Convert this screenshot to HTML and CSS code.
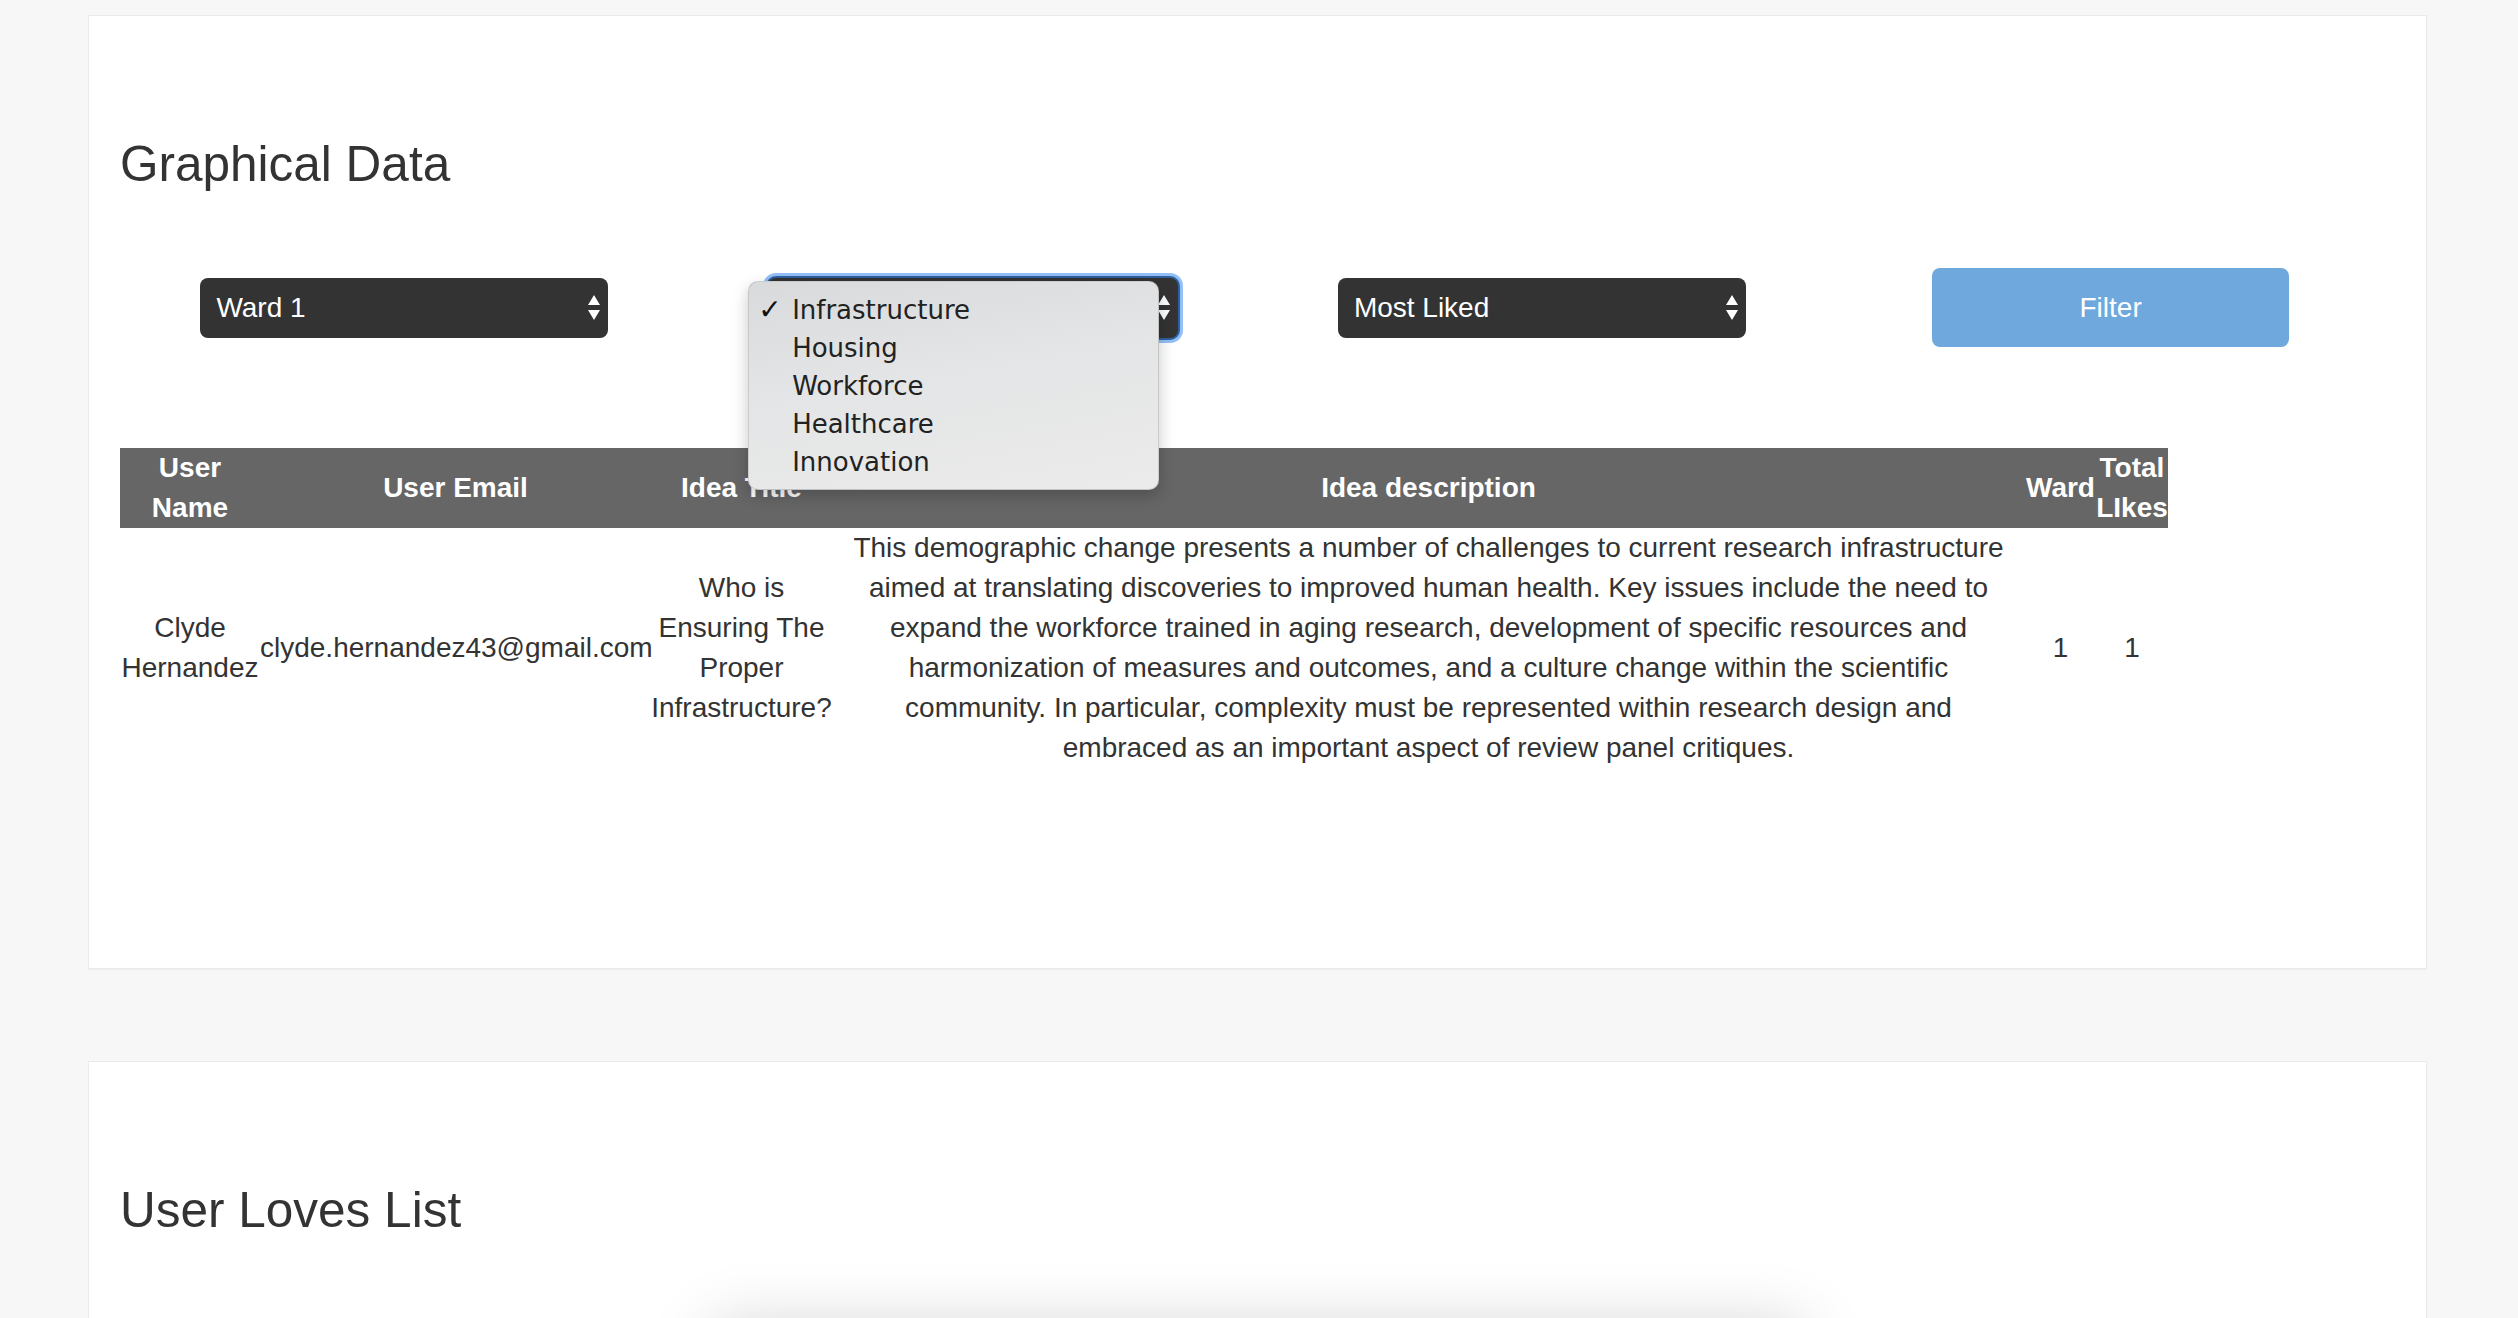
FILE: index.html
```html
<!DOCTYPE html>
<html>
<head>
<meta charset="utf-8">
<title>Graphical Data</title>
<link rel="stylesheet" href="styles.css">
</head>
<body>
<div class="page">
  <section class="card card-data">
    <h2 class="card-title">Graphical Data</h2>
    <div class="filters">
      <div class="filter-cell">
        <div class="select">
          <span class="select-text">Ward 1</span>
          <svg class="select-arrows" width="12" height="26" viewBox="0 0 12 26"><path d="M6 0 L12 10 L0 10 Z M0 15 L12 15 L6 25 Z" fill="#fff"/></svg>
        </div>
      </div>
      <div class="filter-cell">
        <div class="select-wrap">
          <div class="select select-focused">
            <span class="select-text"></span>
            <svg class="select-arrows" width="12" height="26" viewBox="0 0 12 26"><path d="M6 0 L12 10 L0 10 Z M0 15 L12 15 L6 25 Z" fill="#fff"/></svg>
          </div>
          <ul class="menu">
            <li class="menu-item is-checked"><span class="check">✓</span>Infrastructure</li>
            <li class="menu-item">Housing</li>
            <li class="menu-item">Workforce</li>
            <li class="menu-item">Healthcare</li>
            <li class="menu-item">Innovation</li>
          </ul>
        </div>
      </div>
      <div class="filter-cell">
        <div class="select">
          <span class="select-text">Most Liked</span>
          <svg class="select-arrows" width="12" height="26" viewBox="0 0 12 26"><path d="M6 0 L12 10 L0 10 Z M0 15 L12 15 L6 25 Z" fill="#fff"/></svg>
        </div>
      </div>
      <div class="filter-cell">
        <button class="btn-filter">Filter</button>
      </div>
    </div>

    <table class="ideas">
      <colgroup>
        <col class="c-name">
        <col class="c-email">
        <col class="c-title">
        <col class="c-desc">
        <col class="c-ward">
        <col class="c-likes">
      </colgroup>
      <thead>
        <tr>
          <th>User Name</th>
          <th>User Email</th>
          <th>Idea Title</th>
          <th>Idea description</th>
          <th>Ward</th>
          <th>Total LIkes</th>
        </tr>
      </thead>
      <tbody>
        <tr>
          <td>Clyde Hernandez</td>
          <td>clyde.hernandez43@gmail.com</td>
          <td>Who is Ensuring The Proper Infrastructure?</td>
          <td class="desc">This demographic change presents a number of challenges to current research infrastructure aimed at translating discoveries to improved human health. Key issues include the need to expand the workforce trained in aging research, development of specific resources and harmonization of measures and outcomes, and a culture change within the scientific community. In particular, complexity must be represented within research design and embraced as an important aspect of review panel critiques.</td>
          <td>1</td>
          <td>1</td>
        </tr>
      </tbody>
    </table>
  </section>

  <section class="card card-loves">
    <h2 class="card-title">User Loves List</h2>
    <div class="loves-panel"></div>
  </section>
</div>
</body>
</html>
```
FILE: styles.css
```css
html, body {
  margin: 0;
  padding: 0;
}

body {
  background: #f7f7f7;
  font-family: "Liberation Sans", Arial, Helvetica, sans-serif;
  color: #333;
  overflow: hidden;
}

.page {
  padding: 15px 91px 0 88px;
}

.card {
  background: #fff;
  border: 1px solid #ebebeb;
  box-shadow: 0 1px 1px rgba(0, 0, 0, 0.04);
  padding: 0 31px;
}

.card-data {
  padding-bottom: 200px;
}

.card-loves {
  margin-top: 92px;
  padding-bottom: 200px;
}

.card-title {
  margin: 121px 0 0;
  font-size: 49.5px;
  line-height: 53px;
  font-weight: 400;
  color: #333;
}

/* filters */
.filters {
  margin-top: 78px;
  display: grid;
  grid-template-columns: repeat(4, 1fr);
  align-items: center;
  height: 79px;
}

.filter-cell {
  display: flex;
  justify-content: center;
  align-items: center;
}

.select-wrap {
  position: relative;
}

.select {
  box-sizing: border-box;
  width: 408px;
  height: 60px;
  background: #333;
  border-radius: 8px;
  color: #fff;
  font-size: 28px;
  display: flex;
  align-items: center;
  justify-content: space-between;
  padding: 0 8px 0 16px;
}

.select-focused {
  width: 410px;
  box-shadow: 0 0 0 2px #2f5f9c, 0 0 0 5px rgba(110, 170, 245, 0.75);
}

.select-arrows {
  display: block;
}

.btn-filter {
  width: 357px;
  height: 79px;
  border: 0;
  border-radius: 8px;
  background: #6fa8dc;
  color: #fff;
  font-family: "Liberation Sans", Arial, Helvetica, sans-serif;
  font-size: 28px;
  padding: 0;
}

/* native-looking popup menu */
.menu {
  position: absolute;
  left: -20px;
  top: 3px;
  z-index: 5;
  width: 411px;
  box-sizing: border-box;
  margin: 0;
  padding: 9px 0 8px;
  list-style: none;
  border-radius: 10px;
  background: linear-gradient(170deg, #d9dadc 0%, #e4e5e6 45%, #ebebeb 100%);
  border: 1px solid rgba(0, 0, 0, 0.12);
  box-shadow: 0 6px 16px rgba(0, 0, 0, 0.22);
  font-family: "DejaVu Sans", "Lucida Grande", sans-serif;
  font-size: 26px;
  color: #222;
}

.menu-item {
  position: relative;
  height: 38px;
  line-height: 38px;
  padding-left: 43px;
  white-space: nowrap;
}

.check {
  position: absolute;
  left: 9px;
  top: 0;
  font-size: 28px;
  font-weight: bold;
  color: #111;
}

/* table */
.ideas {
  margin-top: 101px;
  border-collapse: collapse;
  table-layout: fixed;
  width: 2048px;
  font-size: 28px;
  line-height: 40px;
  text-align: center;
}

.c-name { width: 140px; }
.c-email { width: 391px; }
.c-title { width: 181px; }
.c-desc { width: 1193px; }
.c-ward { width: 71px; }
.c-likes { width: 72px; }

.ideas th {
  background: #666;
  color: #fff;
  font-weight: 700;
  padding: 0;
  vertical-align: middle;
}

.ideas td {
  padding: 0;
  vertical-align: middle;
  color: #333;
}

.ideas td.desc {
  padding: 0 10px;
}

/* second card */
.loves-panel {
  margin: 90px auto 0;
  width: 1090px;
  height: 400px;
  background: #fff;
  box-shadow: 0 0 60px rgba(0, 0, 0, 0.18);
}
```
